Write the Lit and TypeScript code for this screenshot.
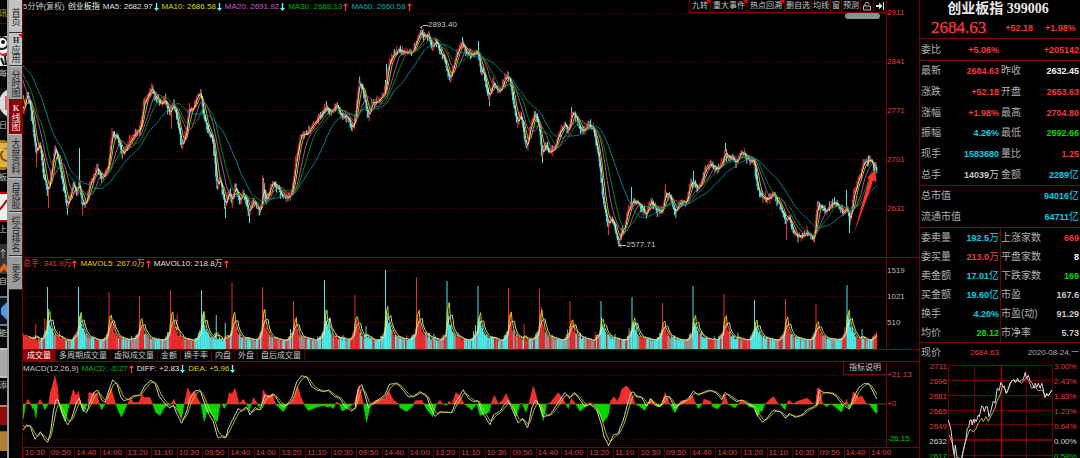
import { LitElement, html, svg, css } from "lit";
import { customElement, property, state } from "lit/decorators.js";
import { classMap } from "lit/directives/class-map.js";

type Pt = [number, number];

/* ---------- series data ---------- */

const pairs = (list: number[]): Pt[] => {
  const out: Pt[] = [];
  for (let i = 0; i < list.length; i += 2) out.push([list[i], list[i + 1]]);
  return out;
};

/** Samples are stored at three units per chart unit, relative to a segment origin. */
const segment = (ox: number, oy: number, list: number[]): Pt[] =>
  pairs(list).map(([x, y]) => [ox + x / 3, oy + y / 3]);

const at = (pts: Pt[], x: number): number => {
  if (x <= pts[0][0]) return pts[0][1];
  for (let i = 1; i < pts.length; i++) {
    if (x <= pts[i][0]) {
      const [x0, y0] = pts[i - 1];
      const [x1, y1] = pts[i];
      return y0 + ((y1 - y0) * (x - x0)) / (x1 - x0 || 1);
    }
  }
  return pts[pts.length - 1][1];
};

let seed = 20200824;
const rnd = () => {
  seed = (seed * 1664525 + 1013904223) % 4294967296;
  return seed / 4294967296;
};

const PRICE = pairs([
  -40, 45, 5, 60, 15, 66, 19, 84, 21, 104, 23, 112, 25, 104, 27, 92, 30, 105, 33, 128, 36, 153, 40, 143, 43, 172,
  48, 193, 55, 147, 60, 167, 67, 208, 73, 184, 77, 193, 79, 180, 82, 205, 86, 203, 90, 184, 97, 167, 102, 180,
  108, 166, 112, 133, 117, 137, 122, 154, 127, 147, 133, 136, 140, 128, 142, 117, 143, 104, 152, 88, 155, 97,
  162, 105, 165, 99, 170, 115, 173, 101, 178, 123, 182, 147, 187, 128, 188, 109, 193, 110, 197, 95, 201, 94,
  203, 113, 207, 128, 213, 141, 217, 188, 220, 178, 225, 207, 229, 190, 232, 203, 235, 185, 240, 202, 243, 190,
  249, 213, 253, 200, 260, 213, 262, 200, 263, 181, 266, 203, 270, 188, 273, 182, 278, 188, 283, 197, 290, 197,
  292, 190, 295, 167, 300, 137, 307, 133, 313, 125, 322, 113, 326, 107, 330, 112, 337, 105, 342, 118, 346, 115,
  352, 128, 354, 125, 357, 100, 359, 82, 363, 90, 368, 117, 372, 103, 378, 102, 385, 92, 387, 75, 389, 62,
  397, 50, 403, 52, 412, 53, 417, 40, 421, 31, 424, 38, 428, 35, 432, 48, 436, 40, 440, 52, 444, 58, 447, 70,
  450, 80, 453, 67, 457, 53, 462, 43, 467, 53, 472, 55, 478, 50, 481, 75, 483, 70, 489, 98, 493, 82, 500, 93,
  505, 77, 510, 79, 513, 100, 517, 124, 521, 113, 525, 143, 527, 147, 530, 127, 535, 114, 539, 127, 542, 157,
  545, 144, 550, 153, 555, 147, 558, 136, 565, 123, 568, 133, 572, 112, 576, 117, 580, 128, 584, 132, 588, 125,
  593, 128, 597, 147, 600, 167, 603, 200, 608, 225, 612, 217, 617, 237, 619, 242, 622, 227, 624, 230, 627, 213,
  632, 201, 638, 203, 646, 215, 651, 201, 657, 210, 662, 212, 665, 193, 670, 197, 675, 213, 680, 202, 686, 203,
  690, 184, 694, 182, 698, 190, 702, 180, 705, 170, 710, 163, 717, 170, 722, 163, 725, 151, 728, 158, 732, 157,
  736, 163, 741, 152, 745, 155, 750, 162, 754, 160, 756, 178, 758, 190, 762, 197, 767, 200, 773, 193, 778, 202,
  783, 213, 786, 222, 789, 217, 793, 232, 799, 237, 807, 232, 814, 240, 817, 204, 822, 208, 826, 212, 832, 202,
  838, 205, 843, 215, 847, 207, 850, 222, 853, 197, 857, 183, 861, 173, 863, 163, 869, 159, 873, 164, 877, 172,
]);

/** Wicks that reach well past the body: x, y, rising. */
const WICKS: [number, number, boolean][] = [
  [79, 148, false], [79, 150, false], [36, 167, true], [48, 208, true], [262, 175, true], [263, 178, false],
  [326, 101, false], [386, 64, false], [385, 80, false], [421, 26, true], [462, 37, false], [478, 41, false],
  [171, 129, true], [542, 163, false], [631, 187, false], [665, 184, true], [693, 171, false], [725, 143, false],
  [786, 240, true], [608, 235, true], [619, 244, true], [846, 190, false], [849, 233, false], [249, 223, false],
  [225, 218, false], [67, 215, false], [82, 215, true], [489, 106, false], [571, 107, false],
];

const STEP = 0.64;
const LEFT = 23;
const LAST = 877;

const lead = 62;
const count = Math.round((LAST - LEFT) / STEP);
const closes: Pt[] = [];
for (let i = -lead; i <= count; i++) {
  const x = LEFT + i * STEP;
  closes.push([x, at(PRICE, x) + (rnd() - 0.5) * 3]);
}

const average = (src: Pt[], n: number): Pt[] => {
  const out: Pt[] = [];
  let sum = 0;
  src.forEach(([x, y], i) => {
    sum += y;
    if (i >= n) sum -= src[i - n][1];
    if (i >= n - 1 && x >= LEFT) out.push([x, sum / n]);
  });
  return out;
};

const line = (pts: Pt[]) => "M" + pts.map(([x, y]) => `${x.toFixed(1)} ${y.toFixed(1)}`).join("L");

const bars = { up: "", down: "" };
for (let i = lead; i < closes.length; i++) {
  const [x, close] = closes[i];
  const open = closes[i - 1][1];
  const up = close < open;
  const top = Math.min(open, close) - rnd() * rnd() * 7;
  const bottom = Math.max(open, close) + rnd() * rnd() * 7;
  bars[up ? "up" : "down"] += `M${x.toFixed(2)} ${top.toFixed(1)}V${bottom.toFixed(1)}`;
}
for (const [x, y, up] of WICKS) bars[up ? "up" : "down"] += `M${x + 0.5} ${y}V${at(PRICE, x)}`;

/* volume: opening bars of each session, x / top / rising */
const BASE = 349;
const OPENS: [number, number, boolean][] = [
  [16.5, 290, true], [47.5, 287, false], [78.5, 287, false], [109, 292, true], [139.5, 296, true], [170.5, 290, true],
  [201.5, 290, false], [232, 282, true], [262.5, 287, true], [293.5, 301, true], [324.5, 280, false],
  [355, 295, true], [385.5, 270, false], [416.5, 277, true], [447, 281, false], [478, 286, false],
  [508.5, 288, true], [539.5, 289, true], [570, 301, true], [601, 301, false], [632, 297, false],
  [662.5, 303, true], [693, 286, false], [724, 294, true], [754.5, 300, false], [785.5, 299, true],
  [816, 304, true], [847, 285, false],
];
const BURSTS: Pt[] = [
  [36, 324], [45, 318], [63, 330], [177, 314], [216.5, 315], [225, 323], [366, 326], [524, 324], [595, 332],
  [674, 335], [862, 329], [131, 336],
];
const volBars = { up: "", down: "", even: "" };
const volumes: Pt[] = [];
let tone: "up" | "down" | "even" = "even";
for (let i = 0; i <= count; i++) {
  const x = LEFT + i * STEP;
  let k = 0;
  while (k < OPENS.length - 1 && OPENS[k + 1][0] <= x + STEP / 2) k++;
  const [ox, oy, oUp] = OPENS[k];
  const d = x - ox;
  const peak = BASE - oy;
  const first = Math.abs(d) < STEP * 0.5;
  const rise = Math.max(0, d - 24) * 1.5;
  let h = 8.5 + Math.exp(-d / 4.6) * peak * 0.46 + rise + Math.exp(-(((d - 15) / 4) ** 2)) * 2 * rnd();
  h *= 0.88 + rnd() * 0.26;
  if (rnd() > 0.96) h *= 1.4;
  if (first) h = peak;
  for (const [bx, by] of BURSTS) if (Math.abs(bx - x) < STEP / 2) h = BASE - by;
  if (x > 875) h = 12 + (x - 875) * 3;
  if (rnd() > 0.55) {
    const r = rnd();
    tone = r < 0.37 ? "up" : r < 0.7 ? "down" : "even";
  }
  if (d < 5) tone = oUp ? "up" : "down";
  if (x > 874) tone = "up";
  volumes.push([x, BASE - h]);
  if (!first) volBars[tone] += `M${x.toFixed(2)} ${BASE}V${(BASE - h).toFixed(1)}`;
}
const openBars = { up: "", down: "" };
for (const [ox, oy, up] of OPENS.slice(1)) openBars[up ? "up" : "down"] += `M${ox} ${BASE}V${oy}`;

const DIFF = [
  ...segment(20, 255, [
    10, 525, 20, 510, 30, 513, 45, 553, 62, 530, 72, 550, 83, 563, 92, 530, 100, 470, 107, 435, 115, 435, 125, 470,
    143, 510, 155, 490, 170, 440, 178, 430, 188, 465, 200, 473, 210, 440, 222, 412, 233, 405, 245, 435, 255, 442,
    265, 410, 278, 375, 290, 385, 302, 425, 310, 436, 325, 434, 340, 422, 360, 420, 375, 392, 393, 376, 405, 385,
    418, 425, 430, 440, 450, 460, 460, 450, 470, 475, 485, 505, 500, 470, 510, 430, 525, 408, 540, 405, 552, 440,
    565, 475, 580, 500, 593, 548, 605, 545, 617, 550, 625, 520, 640, 490, 655, 460, 665, 467, 680, 455, 690, 480,
    705, 458, 720, 465, 735, 420, 750, 425, 760, 415, 775, 440, 790, 455, 800, 450, 815, 430, 830, 380, 845, 362,
    860, 365, 875, 395, 890, 405, 910, 410, 926, 405,
  ]),
  ...segment(330, 255, [
    0, 412, 15, 425, 30, 430, 45, 455, 65, 468, 75, 460, 85, 400, 95, 388, 105, 420, 115, 458, 130, 445, 150, 430,
    165, 420, 178, 388, 200, 384, 215, 400, 235, 425, 250, 425, 270, 410, 290, 425, 303, 460, 315, 485, 330, 470,
    350, 472, 365, 473, 378, 440, 400, 405, 415, 430, 430, 440, 445, 438, 455, 470, 465, 485, 480, 510, 490, 480,
    510, 470, 522, 450, 535, 437, 545, 460, 565, 505, 578, 490, 593, 520, 605, 460, 617, 435, 628, 450, 640, 485,
    660, 480, 680, 450, 705, 412, 718, 430, 733, 412, 750, 435, 765, 455, 780, 447, 800, 465, 815, 510, 822, 545,
    836, 572, 850, 540, 865, 535,
  ]),
  ...segment(620, 255, [
    0, 520, 10, 495, 22, 450, 32, 415, 40, 410, 50, 425, 65, 428, 80, 455, 92, 430, 105, 450, 122, 455, 135, 425,
    148, 425, 165, 460, 180, 445, 205, 430, 220, 408, 235, 420, 250, 412, 270, 405, 290, 415, 305, 435, 315, 412,
    330, 425, 350, 440, 365, 435, 380, 445, 400, 455, 412, 480, 428, 502, 440, 490, 460, 465, 480, 470, 497, 490,
    508, 475, 525, 487, 545, 480, 560, 465, 590, 450, 598, 405, 612, 412, 635, 415, 650, 425, 668, 450, 688, 462,
    700, 430, 715, 400, 732, 385, 745, 385, 757, 405, 770, 432,
  ]),
];

const HIST = [
  ...segment(20, 0, [
    10, -45, 17, 0, 24, 15, 32, 0, 38, -15, 42, -8, 47, -45, 53, 0, 60, 15, 68, 0, 74, -18, 82, -5, 86, 0, 90, 30,
    105, 85, 113, 50, 117, 0, 122, -20, 135, -55, 148, 0, 160, 45, 168, 25, 176, 38, 182, 0, 190, -25, 203, 0,
    207, 35, 232, 30, 238, 0, 245, -18, 255, 0, 273, 50, 287, 0, 293, -15, 304, -40, 322, 0, 333, 18, 340, 5,
    357, 5, 365, 30, 372, 20, 390, 20, 398, 0, 407, -25, 420, -35, 430, -15, 440, -5, 455, 3, 462, 15, 470, -10,
    485, -40, 493, 0, 503, 50, 512, 30, 525, 38, 535, 12, 543, 0, 553, -55, 560, -25, 570, -25, 592, -55, 600, 0,
    605, 0, 613, -15, 620, 0, 628, 35, 636, 30, 645, 48, 658, 0, 670, 15, 680, 0, 688, -18, 695, 0, 700, 20,
    710, 5, 717, -12, 724, 0, 730, 45, 738, 25, 758, 30, 766, 0, 790, -23, 805, 0, 820, 15, 833, 55, 843, 20,
    852, 0, 865, -20, 890, -10, 910, -5, 925, -10,
  ]),
  ...segment(330, 0, [
    0, -5, 10, -15, 18, 5, 25, 5, 37, -22, 55, -10, 72, 0, 88, 60, 100, 0, 110, -55, 122, 0, 138, 12, 165, 18,
    176, 40, 190, 12, 207, 0, 210, -12, 230, -23, 250, -5, 255, 10, 275, 12, 290, -15, 308, -38, 320, 0, 330, 12,
    338, 0, 350, -5, 357, 10, 365, 0, 378, 35, 390, 25, 403, 0, 425, -18, 440, 0, 450, -35, 470, -28, 478, -25,
    483, 0, 493, 27, 505, 0, 518, 12, 528, 32, 543, 0, 558, -40, 570, 0, 575, 3, 588, -25, 596, 0, 610, 55,
    626, 0, 640, -50, 650, 0, 662, 5, 685, 35, 708, 0, 715, -15, 724, 18, 737, 0, 750, -22, 770, -5, 778, 5,
    790, 0, 800, -15, 820, -55, 835, -35, 842, 10, 852, 22, 862, 8,
  ]),
  ...segment(620, 0, [
    0, 25, 5, 45, 20, 55, 35, 35, 45, 0, 60, -8, 75, -20, 83, 0, 92, 18, 105, 0, 115, -10, 125, 0, 135, 35, 150, 0,
    165, -27, 178, 0, 182, 10, 205, 12, 215, 28, 228, 0, 236, -15, 247, 0, 252, 15, 272, 8, 278, -8, 293, -15,
    305, 0, 314, 30, 324, 0, 345, -12, 355, 0, 363, 12, 375, 3, 390, -10, 405, -10, 412, -40, 420, -22, 427, -22,
    435, 0, 460, 23, 475, 0, 480, 0, 495, -18, 500, 0, 507, 12, 520, 0, 530, 8, 562, 18, 580, 0, 587, 0, 592, 50,
    600, 45, 608, 0, 620, -8, 632, 0, 645, -8, 665, -25, 673, 0, 680, 15, 687, -15, 692, 0, 700, 38, 715, 20,
    725, 25, 740, 0, 750, -3, 765, -25, 770, -28,
  ]),
];

const ZERO = 404;
const diff: Pt[] = [];
const dea: Pt[] = [];
const hist = { up: "", down: "" };
let smooth = DIFF[0][1] - 6;
for (let i = 0; i <= count; i++) {
  const x = LEFT + i * STEP;
  const d = at(DIFF, x) + (rnd() - 0.5) * 0.6;
  smooth += (d - smooth) * 0.2;
  diff.push([x, d]);
  dea.push([x, smooth]);
  const h = at(HIST, x);
  hist[h > 0 ? "up" : "down"] += `M${x.toFixed(2)} ${ZERO}V${(ZERO - h).toFixed(1)}`;
}

const DAY = segment(915, 340, [
  100, 240, 108, 270, 115, 330, 118, 345, 121, 315, 126, 353, 140, 356, 145, 330, 148, 318, 152, 300, 157, 265,
  161, 262, 165, 240, 169, 240, 172, 255, 175, 238, 178, 248, 180, 238, 184, 245, 190, 225, 193, 230, 200, 198,
  204, 200, 208, 215, 212, 200, 217, 200, 222, 230, 227, 215, 235, 183, 240, 190, 247, 145, 252, 152, 258, 127,
  264, 140, 268, 138, 273, 160, 279, 148, 285, 130, 290, 124, 297, 118, 301, 128, 308, 115, 312, 126, 320, 120,
  325, 118, 331, 97, 334, 115, 340, 106, 345, 122, 352, 130, 358, 145, 361, 130, 365, 142, 370, 130, 376, 145,
  380, 130, 383, 140, 390, 172, 395, 160, 400, 168, 405, 158, 411, 150,
]);
const DAY_AVG = segment(915, 340, [
  103, 285, 112, 310, 120, 356, 140, 356, 150, 310, 158, 285, 165, 268, 175, 276, 182, 268, 190, 250, 200, 235,
  205, 245, 213, 230, 220, 244, 232, 220, 240, 205, 245, 185, 255, 165, 262, 140, 268, 145, 275, 160, 290, 122,
  310, 122, 320, 130, 335, 112, 342, 124, 350, 145, 360, 140, 370, 152, 383, 150, 390, 172, 395, 162, 400, 168,
  411, 150,
]);

/* ---------- shared bits ---------- */

const arrow = (up: boolean) => html`<svg class="dir ${up ? "is-up" : "is-down"}" viewBox="0 0 5 8" aria-hidden="true">
  ${up ? svg`<path d="M2.5 0 5 3H3.2V8H1.8V3H0Z" />` : svg`<path d="M2.5 8 0 5H1.8V0H3.2V5H5Z" />`}
</svg>`;

const base = css`
  :host {
    display: block;
    box-sizing: border-box;
    font-family: "Liberation Sans", "Noto Sans CJK SC", sans-serif;
    font-size: 8px;
    line-height: 10px;
    color: #c8c8c8;
  }
  * {
    box-sizing: border-box;
  }
  button {
    font: inherit;
    color: inherit;
    background: none;
    border: 0;
    margin: 0;
    padding: 0;
    white-space: nowrap;
  }
  ul,
  ol,
  dl,
  dd,
  h1,
  p {
    margin: 0;
    padding: 0;
    list-style: none;
    font-weight: normal;
  }
  svg {
    display: block;
  }
`;

/* ---------- dock on the far left ---------- */

const DOCK = [
  { label: "每", icon: svg`<rect width="30" height="30" fill="#eee"/><circle cx="25" cy="7" r="6" fill="#fff" stroke="#222" stroke-width="2"/><circle cx="26" cy="6" r="2" fill="#111"/><path d="M22 15c3 4 6 3 8 1v4c-3 1-7 0-8-5Z" fill="#d11"/><path d="M24 22l3 7M28 20l1 9" stroke="#111" stroke-width="2"/>` },
  { label: "日", icon: svg`<rect width="30" height="30" fill="#181818"/><circle cx="37" cy="15" r="15" fill="#ddd"/><path d="M29 8v14" stroke="#e33" stroke-width="1.5"/>` },
  { label: "板", icon: svg`<rect width="30" height="30" rx="3" fill="#a87410"/><path d="M22 3h8v24h-8Z" fill="#e0b040"/><circle cx="30" cy="15" r="6" fill="none" stroke="#7a5208" stroke-width="2"/><path d="M22 10h8" stroke="#fff0a0"/>` },
  { label: "上", icon: svg`<rect width="30" height="30" fill="#f2eeee"/><path d="M0 1h30M0 29h30" stroke="#c00" stroke-width="2"/><path d="M20 20l5-5 5-7" fill="none" stroke="#b00" stroke-width="2"/>` },
  { label: "自", icon: svg`<rect width="30" height="30" fill="#333"/><path d="M26 6v8M24 8l2-3 2 3" stroke="#aaa" fill="none"/><path d="M22 26l5-7 3 3v7l-3-4-3 4Z" fill="#e8641c"/>` },
  { label: "智能", icon: svg`<rect width="30" height="30" fill="#0a1420"/><path d="M0 1h30M0 29h30" stroke="#ddd" stroke-width="1"/><path d="M30 6v18l-6-6v-6Z" fill="#4a9ae8"/>` },
  { label: "添", icon: svg`<rect width="30" height="30" fill="#a8a8a8"/><path d="M0 1h30M0 29h30" stroke="#d8d8d8"/>` },
];

@customElement("app-dock")
class AppDock extends LitElement {
  static styles = [
    base,
    css`
      :host {
        overflow: hidden;
        background: #050505;
      }
      .tag {
        display: flex;
        justify-content: flex-end;
        padding: 9px 0 4px;
        color: #d8b800;
        white-space: nowrap;
        border-bottom: 1px solid #700000;
      }
      .item {
        display: flex;
        flex-direction: column;
        align-items: flex-end;
        width: 100%;
        margin-bottom: 9px;
        gap: 3px;
      }
      .item svg {
        width: 30px;
        height: 30px;
        flex: none;
      }
      .list {
        padding-top: 12px;
      }
      .red {
        height: 20px;
        margin-top: 14px;
        background: #8c0c0c;
        border-top: 2px solid #b09030;
      }
      .gold {
        height: 20px;
        margin-top: 6px;
        background: #b08030;
        border-top: 1px solid #666;
      }
    `,
  ];
  render() {
    return html`
      <div class="tag">资讯</div>
      <div class="list">
        ${DOCK.map(
          (d) => html`<button class="item"><svg viewBox="0 0 30 30" aria-hidden="true">${d.icon}</svg><span>${d.label}</span></button>`
        )}
      </div>
      <div class="red"></div>
      <div class="gold"></div>
    `;
  }
}

/* ---------- vertical page tabs ---------- */

@customElement("page-tabs")
class PageTabs extends LitElement {
  @state() active = 3;
  static styles = [
    base,
    css`
      :host {
        background: #000;
        border-left: 2px solid #9a9a9a;
      }
      .tab {
        display: flex;
        align-items: center;
        justify-content: center;
        position: relative;
        width: 100%;
        min-height: 34px;
        padding: 1px 0;
        background: #9c9c9c;
        color: #222;
        border-bottom: 1px solid #303030;
        border-top: 1px solid #c4c4c4;
        font-size: 9px;
        line-height: 12px;
        writing-mode: vertical-rl;
        text-orientation: upright;
      }
      .long {
        min-height: 44px;
      }
      .light {
        background: #c2c2c2;
        min-height: 33px;
      }
      .on {
        background: #8c0000;
        border-color: #8c0000;
        color: #f0e0e0;
      }
      .latin {
        font-family: "Liberation Serif", serif;
        font-weight: bold;
        font-size: 8px;
      }
      .flag::after {
        content: "";
        position: absolute;
        top: 0;
        right: 0;
        border: 2px solid #f00;
        border-left-color: transparent;
        border-bottom-color: transparent;
      }
    `,
  ];
  render() {
    const tabs = ["首页", "应用", "分时图", "线图", "大盘资料", "自选股", "综合排名", "更多"];
    return html`${tabs.map(
      (t, i) => html`<button
        class=${classMap({ tab: true, light: i < 2, long: t.length > 3, on: i === this.active, flag: i === 1 })}
        @click=${() => (this.active = i)}
      >
        ${i === 1 ? html`<span class="latin">H</span>` : i === 3 ? html`<span class="latin">K</span>` : ""}<span>${t}</span>
      </button>`
    )}`;
  }
}

/* ---------- charts ---------- */

@customElement("chart-board")
class ChartBoard extends LitElement {
  @state() tab = 0;
  static styles = [
    base,
    css`
      :host {
        border-left: 1px solid #7a0000;
        min-width: 0;
      }
      .pane {
        display: grid;
        grid-template-columns: minmax(0, 1fr) 33px;
      }
      .ruled {
        border-top: 1px solid #7a0000;
      }
      .plot {
        position: relative;
        min-width: 0;
      }
      .axis {
        border-left: 1px solid #7a0000;
        padding-top: 8px;
        color: #e63c3c;
      }
      .axis li {
        height: 49px;
      }
      .axis.vol li {
        height: 26px;
        color: #b8b8b8;
      }
      .axis.macd li {
        height: 29px;
      }
      .axis.macd li.mid {
        height: 35px;
      }
      .axis.macd li.neg {
        height: 10px;
        color: #00c800;
      }
      .head {
        display: flex;
        align-items: center;
        height: 13px;
        gap: 3px;
        white-space: nowrap;
      }
      .head.vol {
        height: 12px;
      }
      .head span {
        display: flex;
        align-items: center;
        gap: 1px;
      }
      .name {
        color: #f0f0f0;
      }
      .dir {
        width: 5px;
        height: 8px;
      }
      .is-up {
        fill: #ff3232;
      }
      .is-down {
        fill: #54ffff;
      }
      .white {
        color: #e0e0e0;
      }
      .yellow {
        color: #dcdc00;
      }
      .purple {
        color: #cc5ccc;
      }
      .green {
        color: #00b400;
      }
      .teal {
        color: #00a8b4;
      }
      .red {
        color: #f03838;
      }
      .tools {
        display: flex;
        margin-left: auto;
        border-left: 1px solid #7a0000;
        border-bottom: 1px solid #7a0000;
        height: 13px;
      }
      .tools button {
        display: flex;
        align-items: center;
        position: relative;
        padding: 0 1px;
        border-right: 1px solid #7a0000;
      }
      .tools .wide {
        padding: 0 2px;
      }
      .tools button:last-child {
        border-right: 0;
      }
      .tools .hot::after {
        content: "";
        position: absolute;
        top: 0;
        right: 0;
        border: 2px solid #f00;
        border-left-color: transparent;
        border-bottom-color: transparent;
      }
      .glyph {
        width: 8px;
        height: 10px;
      }
      .price {
        width: 100%;
        height: 244px;
      }
      .volume {
        width: 100%;
        height: 79px;
      }
      .osc {
        width: 100%;
        height: 72px;
      }
      .grid {
        stroke: #6a0000;
        stroke-dasharray: 1 2;
      }
      .up,
      .down,
      .rise,
      .fall,
      .even {
        stroke-width: 0.9;
        fill: none;
      }
      .up {
        stroke: #ff3232;
      }
      .down {
        stroke: #54ffff;
      }
      .even {
        stroke: #b09c9c;
      }
      .fall {
        stroke: #00e600;
        stroke-width: 1;
      }
      .rise {
        stroke: #ff3232;
        stroke-width: 1;
      }
      .ma {
        fill: none;
        stroke-width: 0.9;
      }
      .zero {
        stroke: #a08000;
        stroke-width: 0.6;
      }
      .mark {
        position: absolute;
        display: flex;
        align-items: center;
        color: #c8c8c8;
      }
      .mark svg {
        width: 8px;
        height: 5px;
        stroke: #c8c8c8;
        fill: none;
      }
      .thumb {
        position: absolute;
        top: 13px;
        right: 6px;
        width: 35px;
        height: 6px;
        border-radius: 3px;
        background: #869090;
      }
      .tabs {
        display: flex;
        border-top: 1px solid #7a0000;
        height: 12px;
      }
      .tabs button {
        padding: 0 3px;
        border-right: 1px solid #5a0000;
        line-height: 11px;
      }
      .tabs button.on {
        padding: 0 4px;
        background: #8c0000;
        color: #fff;
      }
      .note {
        margin-left: auto;
        align-self: stretch;
        padding: 0 5px;
        border-left: 1px solid #7a0000;
        border-bottom: 1px solid #7a0000;
      }
      .times {
        display: flex;
        border-top: 1px solid #7a0000;
        padding-right: 24px;
        color: #e63c3c;
      }
      .times li {
        flex: 1 1 0;
        padding-left: 1px;
        border-left: 1px solid #5a0000;
        height: 10px;
      }
    `,
  ];

  private grid(ys: number[]) {
    return ys.map((y) => svg`<line class="grid" x1="23" x2="886" y1=${y} y2=${y} />`);
  }

  private curve(pts: Pt[], color: string) {
    return svg`<path class="ma" stroke=${color} d=${line(pts)} />`;
  }

  render() {
    const ma = [
      ["white", "MA5: 2682.97", false],
      ["yellow", "MA10: 2686.58", false],
      ["purple", "MA20: 2691.92", false],
      ["green", "MA30: 2688.13", true],
      ["teal", "MA60: 2660.58", true],
    ] as [string, string, boolean][];
    const tools = ["九转", "重大事件", "热点回溯", "删自选", "均线", "窗", "预测"];
    const tabs = ["成交量", "多周期成交量", "虚拟成交量", "金额", "换手率", "内盘", "外盘", "盘后成交量"];
    const times = ["10:30", "09:50", "14:40", "14:00", "13:20", "11:10"];
    return html`
      <section class="pane">
        <div class="plot">
          <div class="head">
            <span>5分钟(复权)</span><span class="name">创业板指</span>
            ${ma.map(([c, t, up]) => html`<span class=${c}>${t} ${arrow(up)}</span>`)}
            <div class="tools">
              ${tools.map((t, i) => html`<button class=${classMap({ hot: i < 3, wide: i < 3 })}>${t}</button>`)}
              <button class="wide" aria-label="锁定">
                <svg class="glyph" viewBox="0 0 8 10"><path d="M.5 5h7v4h-7zM2 5V2.5L4 1l2 1.5V3.5M4 6.5v1" fill="none" stroke="#bbb" /></svg>
              </button>
              <button class="wide" aria-label="跳到最新">
                <svg class="glyph" viewBox="0 0 8 10"><path d="M0 4h3V1.5L6.5 5 3 8.5V6H0Z" fill="#ddd" /><path d="M7.5 1v8" stroke="#ddd" /></svg>
              </button>
            </div>
          </div>
          <svg class="price" viewBox="23 13 863 244" preserveAspectRatio="none" role="img" aria-label="K线">
            ${this.grid([13.5, 61.5, 110.5, 159.5, 208.5])}
            <path class="down" d=${bars.down} />
            <path class="up" d=${bars.up} />
            ${this.curve(average(closes, 5), "#f0f0f0")}
            ${this.curve(average(closes, 10), "#d8d800")}
            ${this.curve(average(closes, 20), "#c058c0")}
            ${this.curve(average(closes, 30), "#00a000")}
            ${this.curve(average(closes, 60), "#0098a4")}
            <path d="M854 233 867 186 869.5 179 867 178 875.5 169.500 876 182 873 180.500 870.5 189Z" fill="#ff3232" />
          </svg>
          <span class="thumb"></span>
          <span class="mark" style="left:46%;top:20px">
            <svg viewBox="0 0 8 5"><path d="M0 4.500H1L3 2.500H8" /></svg>2893.40
          </span>
          <span class="mark" style="left:69%;top:240px">
            <svg viewBox="0 0 8 5"><path d="M3 .5 1 2.500 3 4.500M1 2.500H8" /></svg>2577.71
          </span>
        </div>
        <ul class="axis">
          ${[2911, 2841, 2771, 2701, 2631].map((v) => html`<li>${v}</li>`)}
        </ul>
      </section>

      <section class="pane ruled">
        <div class="plot">
          <div class="head vol">
            <span class="red">总手: 341.9万 ${arrow(true)}</span>
            <span class="yellow">MAVOL5: 267.0万 ${arrow(true)}</span>
            <span class="white">MAVOL10: 218.8万 ${arrow(true)}</span>
          </div>
          <svg class="volume" viewBox="23 270 863 79" preserveAspectRatio="none" role="img" aria-label="成交量">
            ${this.grid([270.5, 296.5, 322.5])}
            <path class="even" d=${volBars.even} />
            <path class="up" d=${volBars.up} />
            <path class="down" d=${volBars.down} />
            <path class="up" d=${openBars.up} />
            <path class="down" d=${openBars.down} />
            ${this.curve(average(volumes, 5), "#e0e000")}
            ${this.curve(average(volumes, 10), "#e8e8e8")}
          </svg>
        </div>
        <ul class="axis vol">
          ${[1519, 1021, 510].map((v) => html`<li>${v}</li>`)}
        </ul>
      </section>

      <nav class="tabs">
        ${tabs.map((t, i) => html`<button class=${classMap({ on: i === this.tab })} @click=${() => (this.tab = i)}>${t}</button>`)}
      </nav>

      <section class="pane ruled">
        <div class="plot">
          <div class="head">
            <span>MACD(12,26,9)</span>
            <span class="green">MACD: -6.27 ${arrow(true)}</span>
            <span class="white">DIFF: +2.83 ${arrow(false)}</span>
            <span class="yellow">DEA: +5.96 ${arrow(false)}</span>
            <button class="note">指标说明</button>
          </div>
          <svg class="osc" viewBox="23 375 863 72" preserveAspectRatio="none" role="img" aria-label="MACD">
            ${this.grid([375.5, 439.5])}
            <path class="rise" d=${hist.up} />
            <path class="fall" d=${hist.down} />
            <line class="zero" x1="23" x2="886" y1="404" y2="404" />
            ${this.curve(diff, "#f0f0f0")} ${this.curve(dea, "#d8d800")}
          </svg>
        </div>
        <ul class="axis macd">
          <li>+21.13</li>
          <li class="mid">+0</li>
          <li class="neg">-26.15</li>
        </ul>
      </section>
      <ol class="times">
        ${Array.from({ length: 34 }, (_, i) => html`<li>${times[i % 6]}</li>`)}
      </ol>
    `;
  }
}

/* ---------- quote panel ---------- */

type Cell = [string, string, string];

@customElement("quote-panel")
class QuotePanel extends LitElement {
  @property() code = "399006";
  static styles = [
    base,
    css`
      :host {
        border-left: 1px solid #7a0000;
        font-size: 10px;
        line-height: 12px;
        color: #b0b0b0;
        overflow: hidden;
      }
      .title {
        font: bold 14px/18px "Liberation Serif", "Noto Sans CJK SC", serif;
        color: #e8e8e8;
        padding-right: 4px;
        text-align: center;
        white-space: nowrap;
      }
      .last {
        display: flex;
        align-items: center;
        height: 20px;
        padding-left: 11px;
        color: #f03838;
        font-weight: bold;
        font-size: 9px;
        white-space: nowrap;
      }
      .last strong {
        font: 17px/20px "Liberation Serif", serif;
        -webkit-text-stroke: 0.4px #f03838;
        margin-right: 19px;
      }
      .last span + span {
        margin-left: 12px;
      }
      .block {
        display: grid;
        grid-template-columns: repeat(2, minmax(0, 1fr));
        grid-auto-rows: 1fr;
        border-top: 1px solid #7a0000;
      }
      .one {
        grid-template-columns: minmax(0, 1fr);
        min-height: 42px;
      }
      .ratio {
        min-height: 22px;
      }
      .six {
        min-height: 125px;
      }
      .deal {
        min-height: 115px;
      }
      .deal .cell:nth-child(even) {
        border-left: 1px solid #7a0000;
        padding-left: 0;
      }
      .cell {
        display: flex;
        align-items: center;
        justify-content: space-between;
        padding: 0 1px;
        white-space: nowrap;
      }
      .cell dd {
        font-size: 9px;
        font-weight: bold;
      }
      .cell .unit {
        font-size: 10px;
        font-weight: normal;
      }
      .r {
        color: #f83838;
      }
      .c {
        color: #00d0e4;
      }
      .g {
        color: #00dc00;
      }
      .w {
        color: #f4f4f4;
      }
      .n {
        color: #c8c8c8;
      }
      .day {
        display: flex;
        align-items: center;
        justify-content: space-between;
        height: 20px;
        border-top: 1px solid #7a0000;
        padding: 0 1px;
        font-size: 8px;
        white-space: nowrap;
      }
      .day .k {
        font-size: 10px;
      }
      .mini {
        display: grid;
        grid-template-columns: 28px minmax(0, 1fr) 27px;
        font-size: 8px;
        line-height: 10px;
      }
      .mini svg {
        width: 100%;
        height: 96px;
      }
      .mini li {
        height: 15px;
        color: #e63c3c;
      }
      .mini .left {
        text-align: right;
        padding-right: 1px;
      }
      .mini .right {
        padding-left: 1px;
      }
      .mini li.zero {
        color: #d8d8d8;
      }
      .mini li.low {
        color: #00c800;
      }
      .rule {
        stroke: #6e0000;
      }
      .bold {
        stroke: #a00000;
        stroke-width: 1.6;
      }
      .dots {
        stroke: #5a0000;
        stroke-dasharray: 1 2;
      }
    `,
  ];

  private cell([label, value, tone]: Cell) {
    const m = /^(.*?)([万亿]?)$/.exec(value)!;
    return html`<div class="cell"><dt>${label}</dt><dd class=${tone}>${m[1]}${m[2] ? html`<span class="unit">${m[2]}</span>` : ""}</dd></div>`;
  }

  render() {
    const ratio: Cell[] = [["委比", "+5.06%", "r"], ["", "+205142", "r"]];
    const main: Cell[] = [
      ["最新", "2684.63", "r"], ["昨收", "2632.45", "w"],
      ["涨跌", "+52.18", "r"], ["开盘", "2653.63", "r"],
      ["涨幅", "+1.98%", "r"], ["最高", "2704.80", "r"],
      ["振幅", "4.26%", "c"], ["最低", "2592.66", "g"],
      ["现手", "1583680", "c"], ["量比", "1.25", "r"],
      ["总手", "14039万", "n"], ["金额", "2289亿", "c"],
    ];
    const cap: Cell[] = [["总市值", "94016亿", "c"], ["流通市值", "64711亿", "c"]];
    const deal: Cell[] = [
      ["委卖量", "192.5万", "c"], ["上涨家数", "669", "r"],
      ["委买量", "213.0万", "r"], ["平盘家数", "8", "w"],
      ["卖金额", "17.01亿", "c"], ["下跌家数", "169", "g"],
      ["买金额", "19.60亿", "c"], ["市盈", "167.6", "n"],
      ["换手", "4.20%", "c"], ["市盈(动)", "91.29", "n"],
      ["均价", "28.12", "g"], ["市净率", "5.73", "n"],
    ];
    const tone = (i: number) => classMap({ zero: i === 5, low: i === 6 });
    return html`
      <h1 class="title">创业板指 ${this.code}</h1>
      <p class="last"><strong>2684.63</strong><span>+52.18</span><span>+1.98%</span></p>
      <dl class="block ratio">${ratio.map((c) => this.cell(c))}</dl>
      <dl class="block six">${main.map((c) => this.cell(c))}</dl>
      <dl class="block one">${cap.map((c) => this.cell(c))}</dl>
      <dl class="block deal">${deal.map((c) => this.cell(c))}</dl>
      <p class="day"><span class="k">现价</span><span class="r">2684.63</span><span>2020-08-24,一</span></p>
      <div class="mini">
        <ul class="left">${[2711, 2696, 2681, 2665, 2649, 2632, 2617].map((v, i) => html`<li class=${tone(i)}>${v}</li>`)}</ul>
        <svg viewBox="948 362 105 96" preserveAspectRatio="none" role="img" aria-label="分时">
          ${[365.5, 380.5, 395.5, 410.5, 424.5, 455.5].map((y) => svg`<line class="rule" x1="948" x2="1053" y1=${y} y2=${y} />`)}
          ${[948.5, 974.5, 1026.5, 1052.5].map((x) => svg`<line class="rule" x1=${x} x2=${x} y1="365" y2="458" />`)}
          ${[962.5, 988.5, 1013.5, 1039.5].map((x) => svg`<line class="dots" x1=${x} x2=${x} y1="365" y2="458" />`)}
          <line class="bold" x1="948" x2="1053" y1="440" y2="440" />
          <line class="bold" x1="1001.5" x2="1001.5" y1="365" y2="458" />
          <path d=${line(DAY_AVG)} fill="none" stroke="#b4b450" />
          <path d=${line(DAY)} fill="none" stroke="#d8d8d8" />
        </svg>
        <ul class="right">${["3.00%", "2.43%", "1.83%", "1.23%", "0.64%", "0.00%", "0.58%"].map((v, i) => html`<li class=${tone(i)}>${v}</li>`)}</ul>
      </div>
    `;
  }
}

@customElement("app-root")
class AppRoot extends LitElement {
  static styles = css`
    :host {
      display: grid;
      grid-template-columns: 7px 15px minmax(0, 1fr) 161px;
      height: 100vh;
      overflow: hidden;
      background: #000;
    }
    app-dock,
    page-tabs,
    chart-board,
    quote-panel {
      min-height: 0;
    }
  `;
  render() {
    return html`<app-dock></app-dock><page-tabs></page-tabs><chart-board></chart-board><quote-panel></quote-panel>`;
  }
}
